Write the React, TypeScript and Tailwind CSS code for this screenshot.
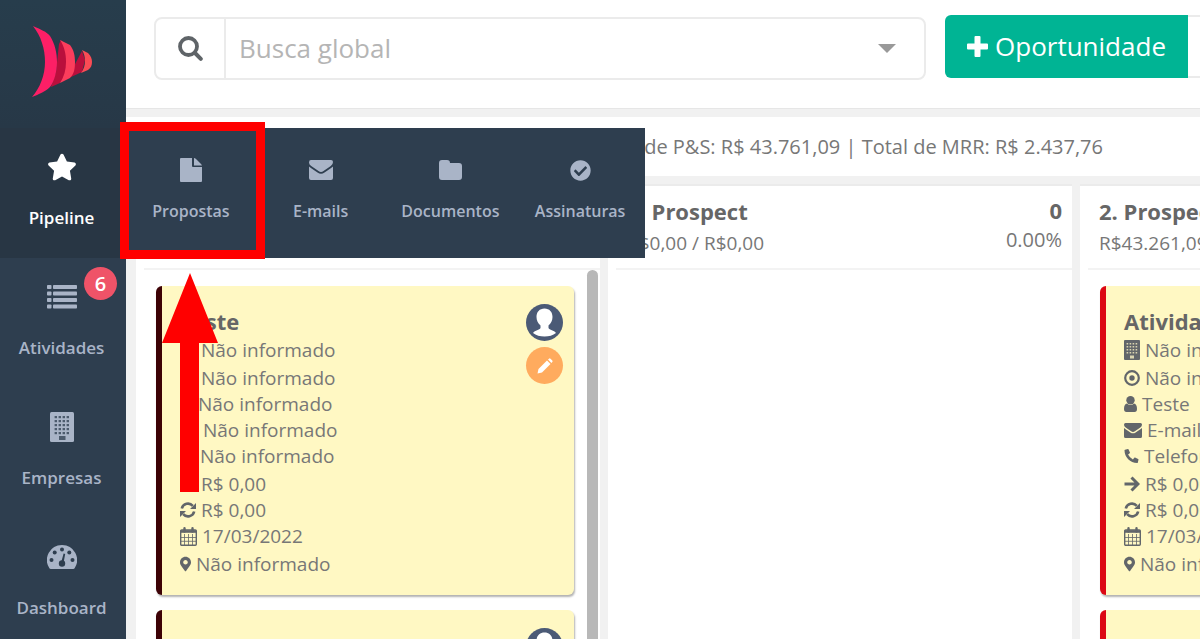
import type { ReactNode } from "react";
import { FaCheckCircle, FaMapMarkerAlt, FaPhoneAlt, FaStar } from "react-icons/fa";

type Row = { icon: ReactNode; text: string };
type Deal = { title: string; company: string; source: string; contact: string; email: string; phone: string };

const columns = [
  { title: "", values: "", count: "", percent: "", accent: "border-[#3d0206]", scroll: true },
  { title: "1. Prospect", values: "R$0,00 / R$0,00", count: "0", percent: "0.00%", accent: "", scroll: false },
  { title: "2. Prospect", values: "R$43.261,09 / R$0,00", count: "", percent: "", accent: "border-[#dc0814]", scroll: false },
];

const empty = "Não informado";
const deals: (Deal | null)[] = [
  { title: "Teste", company: empty, source: empty, contact: empty, email: empty, phone: empty },
  null,
  { title: "Atividade", company: empty, source: empty, contact: "Teste", email: "E-mail", phone: "Telefone" },
];

function Logo() {
  return (
    <svg viewBox="0 0 62 72" className="h-[72px] w-[62px]" aria-hidden="true">
      <path d="M27 18L29 14L35 26V48L28 57L19 61L24 46ZM42 40L50 25L53 34L50 46L39 51Z" fill="#b90f3c" />
      <path d="M1 0C8 3 15 6 18 10C23 18 25 27 25 36C25 46 22 56 18 61C13 66 7 68 0 71C8 62 13 49 13 36C13 23 9 10 1 0Z" fill="#fd1f66" />
      <path d="M28 14L38 19C42 24 43 30 43 36C43 43 42 48 38 52L28 57C32 51 34 44 34 36C34 27 32 20 28 14Z" fill="#fb3d5c" />
      <path d="M50 24L56 27C59 30 60 33 60 36C60 39 59 42 56 44L49 47C52 43 53 39 53 35C53 31 52 27 50 24Z" fill="#fb4c55" />
    </svg>
  );
}

function FileIcon() {
  return (
    <svg viewBox="0 0 22 24" className="h-6 w-[22px]" fill="currentColor" aria-hidden="true">
      <path d="M1 0H12V8Q12 9 13 9H22V23Q22 24 21 24H1Q0 24 0 23V1Q0 0 1 0Z" />
      <path d="M14 0Q15 0 16 1L21 6Q22 7 22 7.5H14Z" />
    </svg>
  );
}

function Envelope({ className }: { className: string }) {
  return (
    <svg viewBox="0 0 24 20" className={className} fill="currentColor" aria-hidden="true">
      <path d="M2 0H22Q24 0 24 2Q24 4.5 21.8 6L14.5 11Q12 12.8 9.5 11L2.2 6Q0 4.5 0 2.4Q0 0 2 0Z" />
      <path d="M0 6.5Q1 7.5 8.5 12.6Q12 15 15.5 12.6Q23 7.5 24 6.5V18Q24 20 22 20H2Q0 20 0 18Z" />
    </svg>
  );
}

function Folder() {
  return (
    <svg viewBox="0 0 23 20" className="h-5 w-[23px]" fill="currentColor" aria-hidden="true">
      <path d="M3 0H8Q11 0 11 3H20Q23 3 23 6V17Q23 20 20 20H3Q0 20 0 17V3Q0 0 3 0Z" />
    </svg>
  );
}

function ListIcon() {
  return (
    <svg viewBox="0 0 30 24" className="h-6 w-[30px]" fill="currentColor" aria-hidden="true">
      {[0, 6.5, 13, 19.5].map((y) => (
        <g key={y}>
          <rect x="0" y={y} width="4.5" height="4" rx="0.8" />
          <rect x="6" y={y} width="24" height="4" rx="0.8" />
        </g>
      ))}
    </svg>
  );
}

function Building({ className }: { className: string }) {
  return (
    <svg viewBox="0 0 24 30" className={className} aria-hidden="true">
      <rect width="24" height="30" rx="1.5" fill="currentColor" />
      <g className="fill-[#2e3e4f]/75">
        {[4, 8, 12, 16, 20].map((y) =>
          [4, 8, 12, 16].map((x) => <rect key={`${x}-${y}`} x={x + 0.6} y={y} width="2.4" height="2.2" />)
        )}
        <rect x="9" y="24" width="6.5" height="4" />
      </g>
    </svg>
  );
}

function SmallBuilding() {
  return (
    <svg viewBox="0 0 16 20" className="h-5 w-4" aria-hidden="true">
      <rect width="16" height="20" rx="1" fill="currentColor" />
      <g fill="#d9d4b0">
        {[3, 6, 9, 12].map((y) => [3, 6, 9, 12].map((x) => <rect key={`${x}-${y}`} x={x - 0.4} y={y} width="1.6" height="1.5" />))}
        <rect x="6" y="15.5" width="4" height="3" />
      </g>
    </svg>
  );
}

function Gauge() {
  return (
    <svg viewBox="0 0 30 24" className="h-6 w-[30px]" aria-hidden="true">
      <path d="M15 0A15 15 0 0 1 27.6 23.2Q27.2 24 26.2 24H3.8Q2.8 24 2.4 23.2A15 15 0 0 1 15 0Z" fill="currentColor" />
      <g fill="#2e3e4f">
        <circle cx="4.5" cy="15" r="2" />
        <circle cx="7.7" cy="7.6" r="2" />
        <circle cx="15" cy="4.5" r="2" />
        <circle cx="22.3" cy="7.6" r="2" />
        <circle cx="25.5" cy="15" r="2" />
        <circle cx="15" cy="18.5" r="3.2" />
        <path d="M16.6 8.5L18.2 9L16.5 18H14Z" />
      </g>
    </svg>
  );
}

function Magnifier() {
  return (
    <svg viewBox="0 0 25 25" className="size-[25px]" fill="none" stroke="currentColor" aria-hidden="true">
      <circle cx="10.5" cy="10.5" r="8.5" strokeWidth="3.8" />
      <path d="M17 17L22.8 22.8" strokeWidth="4" strokeLinecap="round" />
    </svg>
  );
}

function Plus() {
  return (
    <svg viewBox="0 0 21 21" className="size-[21px]" fill="currentColor" aria-hidden="true">
      <path d="M8.5 0H12.5Q13.5 0 13.5 1V7.5H20Q21 7.5 21 8.5V12.5Q21 13.5 20 13.5H13.5V20Q13.5 21 12.5 21H8.5Q7.5 21 7.5 20V13.5H1Q0 13.5 0 12.5V8.5Q0 7.5 1 7.5H7.5V1Q7.5 0 8.5 0Z" />
    </svg>
  );
}

function Target() {
  return (
    <svg viewBox="0 0 16 16" className="size-4" aria-hidden="true">
      <circle cx="8" cy="8" r="6.8" fill="none" stroke="currentColor" strokeWidth="2.2" />
      <circle cx="8" cy="8" r="2.7" fill="currentColor" />
    </svg>
  );
}

function Person() {
  return (
    <svg viewBox="0 0 13 16" className="h-4 w-[13px]" fill="currentColor" aria-hidden="true">
      <circle cx="6.5" cy="4.2" r="4.2" />
      <path d="M3 7.5Q6.5 10.5 10 7.5Q13 8 13 13Q13 16 10.5 16H2.5Q0 16 0 13Q0 8 3 7.5Z" />
    </svg>
  );
}

function Arrow() {
  return (
    <svg viewBox="0 0 16 16" className="size-4" fill="none" stroke="currentColor" strokeWidth="3" aria-hidden="true">
      <path d="M0.5 8H13M7.5 1.5L14 8L7.5 14.5" />
    </svg>
  );
}

function Refresh() {
  return (
    <svg viewBox="0 0 16 16" className="size-4" aria-hidden="true">
      <path d="M1.8 6.5A6.4 6.4 0 0 1 12.8 3.8M14.2 9.5A6.4 6.4 0 0 1 3.2 12.2" fill="none" stroke="currentColor" strokeWidth="2.6" />
      <path d="M16 1V7H10ZM0 15V9H6Z" fill="currentColor" />
    </svg>
  );
}

function Calendar() {
  return (
    <svg viewBox="0 0 17 19" className="h-[19px] w-[17px]" fill="none" stroke="currentColor" aria-hidden="true">
      <rect x="0.7" y="3" width="15.6" height="15.3" rx="1" strokeWidth="1.4" />
      <path d="M0.7 4.5H16.3" strokeWidth="2.6" />
      <path d="M4.5 1.2V4.5M12.5 1.2V4.5" strokeWidth="2.4" strokeLinecap="round" />
      <path d="M4.5 7V18M8.5 7V18M12.5 7V18M1 10.5H16M1 14.3H16" strokeWidth="0.8" />
    </svg>
  );
}

function Avatar() {
  return (
    <svg viewBox="0 0 37 37" className="size-[37px]" aria-hidden="true">
      <circle cx="18.5" cy="18.5" r="18.5" fill="#4b5a76" />
      <path d="M18.5 4.5C23.5 4.5 26.5 8 26.5 13C26.5 16.5 25 19.5 22.5 21.5V24C23.5 26 28 26 30 29C27 31.5 23 32.5 18.5 32.5S10 31.5 7 29C9 26 13.5 26 14.5 24V21.5C12 19.5 10.5 16.5 10.5 13C10.5 8 13.5 4.5 18.5 4.5Z" fill="#fff" />
    </svg>
  );
}

function Pencil() {
  return (
    <svg viewBox="0 0 16 16" className="size-4" fill="#fff" aria-hidden="true">
      <path d="M0.5 15.5L1.5 11L10 2.5L13.5 6L5 14.5Z" />
      <path d="M11 1.6L12 0.7Q12.8 0 13.5 0.7L15.3 2.5Q16 3.2 15.3 4L14.4 5Z" />
    </svg>
  );
}

function dealRows(d: Deal): Row[][] {
  return [
    [{ icon: <SmallBuilding />, text: d.company }],
    [
      { icon: <Target />, text: d.source },
      { icon: <Person />, text: d.contact },
      { icon: <Envelope className="h-[15px] w-[18px]" />, text: d.email },
      { icon: <FaPhoneAlt className="h-[14px] w-[15px]" />, text: d.phone },
    ],
    [
      { icon: <Arrow />, text: "R$ 0,00" },
      { icon: <Refresh />, text: "R$ 0,00" },
      { icon: <Calendar />, text: "17/03/2022" },
    ],
    [{ icon: <FaMapMarkerAlt className="h-4 w-[11px]" />, text: empty }],
  ];
}

function Card({ deal, accent }: { deal?: Deal; accent: string }) {
  return (
    <article className={`flex h-[309px] shrink-0 justify-between rounded-md border-l-6 bg-[#fff8c3] pt-[18px] pr-[11px] pl-[18px] shadow-[1px_2px_2px_rgba(0,0,0,0.3)] ${accent}`}>
      <div>
        {deal && (
          <>
            <h3 className="pt-0.5 text-[22px] leading-[31px] font-bold text-[#666]">{deal.title}</h3>
            <div className="flex flex-col gap-0.5">
              {dealRows(deal).map((group, i) => (
                <ul key={i}>
                  {group.map((row, j) => (
                    <li key={j} className="flex h-[26px] items-center gap-[5px] whitespace-nowrap">
                      <span className="text-[#62666a]">{row.icon}</span>
                      {row.text}
                    </li>
                  ))}
                </ul>
              ))}
            </div>
          </>
        )}
      </div>
      <div className="flex flex-col gap-1.5">
        <Avatar />
        <button aria-label="Editar" className="flex size-[37px] items-center justify-center rounded-full bg-[#ffab5e]">
          <Pencil />
        </button>
      </div>
    </article>
  );
}

const menu = [
  { label: "Pipeline", icon: <FaStar className="size-[30px]" />, active: true },
  { label: "Atividades", icon: <ListIcon />, badge: "6" },
  { label: "Empresas", icon: <Building className="h-[30px] w-6" /> },
  { label: "Dashboard", icon: <Gauge /> },
];

const submenu = [
  { label: "Propostas", icon: <FileIcon /> },
  { label: "E-mails", icon: <Envelope className="h-5 w-6" /> },
  { label: "Documentos", icon: <Folder /> },
  { label: "Assinaturas", icon: <FaCheckCircle className="size-[21px]" /> },
];

export default function App() {
  return (
    <div className="relative flex h-screen overflow-hidden bg-[#f1f1f1] font-['Open_Sans','Noto_Sans',sans-serif] text-[19px] text-[#777]">
      <nav className="w-[126px] shrink-0 bg-[#2e3e4f]">
        <div className="flex h-32 justify-center bg-linear-to-b from-[#273d4c] to-[#273847] pt-[26px]">
          <Logo />
        </div>
        {menu.map((m) => (
          <a
            key={m.label}
            href="#"
            className={`relative flex h-[130px] flex-col items-center pt-5 pr-[3px] text-[17px] font-semibold ${
              m.active ? "bg-[#283644] text-white" : "text-[#a9b4c7]"
            }`}
          >
            <span className="flex h-[38px] items-center">{m.icon}</span>
            <span className="mt-5 leading-6">{m.label}</span>
            {m.badge && (
              <span className="absolute top-[9px] right-[9px] flex size-[33px] items-center justify-center rounded-full bg-[#ef5368] text-xl text-white">
                {m.badge}
              </span>
            )}
          </a>
        ))}
      </nav>

      <div className="flex min-w-0 flex-1 flex-col">
        <header className="flex h-[109px] shrink-0 items-start border-b border-[#e6e6e6] bg-white pt-[15px] pl-7">
          <div className="mt-0.5 flex h-[63px] flex-1 rounded-lg border-2 border-[#ebebeb]">
            <button aria-label="Buscar" className="flex w-[70px] items-center justify-center border-r-2 border-[#ebebeb] text-[#5f6468]">
              <Magnifier />
            </button>
            <input aria-label="Busca global" placeholder="Busca global" className="min-w-0 flex-1 px-[13px] text-[26px] outline-none placeholder:text-[#b5b5b5]" />
            <button aria-label="Abrir opções" className="px-7 text-[#999]">
              <svg viewBox="0 0 18 9" className="h-[9px] w-[18px]" fill="currentColor" aria-hidden="true">
                <path d="M0 0H18L9 9Z" />
              </svg>
            </button>
          </div>
          <button className="ml-[19px] flex h-[63px] w-[243px] items-center justify-center gap-[7px] rounded-l-md bg-[#00b494] text-[26px] text-white">
            <Plus />
            Oportunidade
          </button>
          <button aria-label="Mais ações" className="h-[63px] w-3 border-y-2 border-[#ebebeb]" />
        </header>

        <div className="mt-2 flex h-[59px] shrink-0 items-center justify-end bg-white pr-[97px] text-xl whitespace-nowrap">
          Total de P&amp;S: R$ 43.761,09 | Total de MRR: R$ 2.437,76
        </div>

        <main className="mt-2 flex min-h-0 flex-1 gap-2 overflow-hidden pl-2.5">
          {columns.map((c, i) => (
            <section key={i} className="flex w-[464px] shrink-0 flex-col border-t-2 border-[#ebebeb] bg-white">
              <div className="ml-2 flex h-[84px] shrink-0 justify-between border-b-2 border-[#f3f3f3] pt-[9px] pr-2.5 pl-[11px]">
                <div>
                  <h2 className="text-[22px] leading-8 font-bold text-[#666]">{c.title}</h2>
                  <p className="leading-8">{c.values}</p>
                </div>
                <div className="text-right">
                  <p className="text-[22px] leading-[30px] font-bold text-[#666]">{c.count}</p>
                  <p className="text-xl leading-[30px]">{c.percent}</p>
                </div>
              </div>
              <div className="flex min-h-0 flex-1 justify-between overflow-hidden">
                <div className="flex w-[438px] flex-col gap-[15px] pt-4 pl-5">
                  {deals[i] && (
                    <>
                      <Card deal={deals[i]} accent={c.accent} />
                      <Card accent={c.accent} />
                    </>
                  )}
                </div>
                {c.scroll && <div className="mr-0.5 w-[11px] rounded-t-full bg-[#b8b8b8]" />}
              </div>
            </section>
          ))}
        </main>
      </div>

      {/* flyout of the Pipeline item */}
      <div className="absolute top-32 left-[126px] grid h-[130px] w-[519px] grid-cols-4 bg-[#2e3e4f] text-base font-semibold text-[#a9b4c7]">
        {submenu.map((s) => (
          <a key={s.label} href="#" className="flex flex-col items-center pt-[22px]">
            <span className="flex h-10 items-center">{s.icon}</span>
            <span className="mt-[9px] leading-6">{s.label}</span>
          </a>
        ))}
      </div>

      {/* highlight and arrow */}
      <div className="absolute top-[122px] left-[120px] h-[137px] w-[145px] border-9 border-[#ff0000]" />
      <svg viewBox="0 0 56 219" className="absolute top-[273px] left-[162px] h-[219px] w-14" fill="#ff0000" aria-hidden="true">
        <path d="M28 0L56 70H37V219H18V70H0Z" />
      </svg>
    </div>
  );
}
